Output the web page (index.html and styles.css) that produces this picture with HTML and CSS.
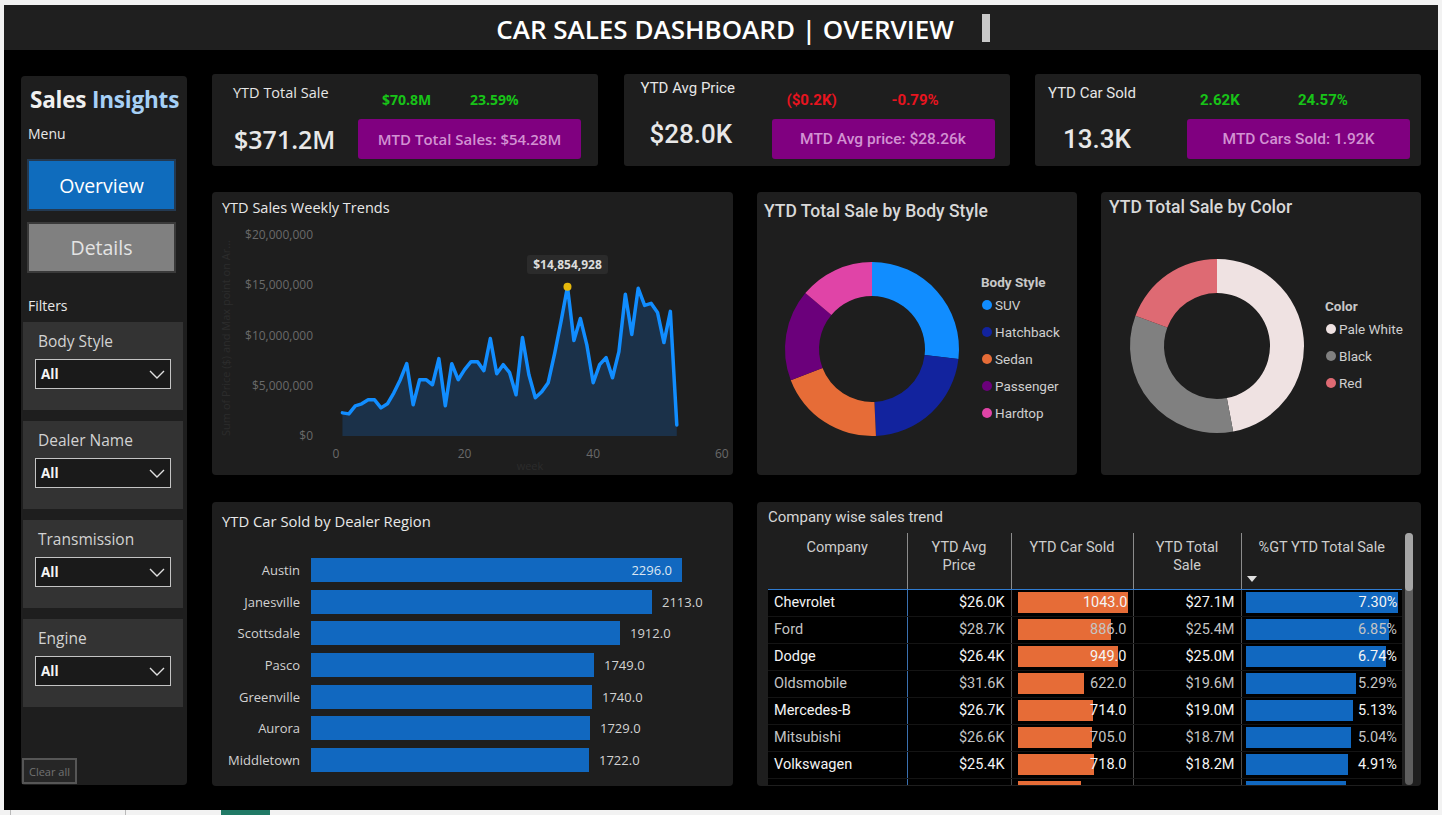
FILE: index.html
```html
<!DOCTYPE html>
<html lang="en">
<head>
<meta charset="utf-8">
<title>Car Sales Dashboard | Overview</title>
<link rel="stylesheet" href="styles.css">
</head>
<body>
<div class="screen">
  <header class="topbar">
    <h1 class="topbar-title">CAR SALES DASHBOARD | OVERVIEW</h1>
    <span class="topbar-mark"></span>
  </header>

  <div class="workspace">
    <aside class="sidebar">
      <div class="brand"><span class="brand-a">Sales</span> <span class="brand-b">Insights</span></div>
      <div class="side-label">Menu</div>
      <button class="nav-btn nav-btn--active">Overview</button>
      <button class="nav-btn nav-btn--muted">Details</button>
      <div class="side-label side-label--filters">Filters</div>

      <div class="slicer">
        <div class="slicer-title">Body Style</div>
        <div class="dropdown"><span>All</span>
          <svg class="chev" width="16" height="9" viewBox="0 0 16 9"><polyline points="1,1 8,8 15,1"/></svg>
        </div>
      </div>
      <div class="slicer">
        <div class="slicer-title">Dealer Name</div>
        <div class="dropdown"><span>All</span>
          <svg class="chev" width="16" height="9" viewBox="0 0 16 9"><polyline points="1,1 8,8 15,1"/></svg>
        </div>
      </div>
      <div class="slicer">
        <div class="slicer-title">Transmission</div>
        <div class="dropdown"><span>All</span>
          <svg class="chev" width="16" height="9" viewBox="0 0 16 9"><polyline points="1,1 8,8 15,1"/></svg>
        </div>
      </div>
      <div class="slicer">
        <div class="slicer-title">Engine</div>
        <div class="dropdown"><span>All</span>
          <svg class="chev" width="16" height="9" viewBox="0 0 16 9"><polyline points="1,1 8,8 15,1"/></svg>
        </div>
      </div>

      <button class="clear-all">Clear all</button>
    </aside>

    <main class="content">
      <section class="kpi-row">
        <article class="kpi kpi--sale">
          <div class="kpi-label">YTD Total Sale</div>
          <div class="kpi-deltas"><span class="up">$70.8M</span><span class="up">23.59%</span></div>
          <div class="kpi-value">$371.2M</div>
          <div class="kpi-mtd">MTD Total Sales: $54.28M</div>
        </article>
        <article class="kpi kpi--price">
          <div class="kpi-label">YTD Avg Price</div>
          <div class="kpi-deltas"><span class="down">($0.2K)</span><span class="down">-0.79%</span></div>
          <div class="kpi-value">$28.0K</div>
          <div class="kpi-mtd">MTD Avg price: $28.26k</div>
        </article>
        <article class="kpi kpi--sold">
          <div class="kpi-label">YTD Car Sold</div>
          <div class="kpi-deltas"><span class="up">2.62K</span><span class="up">24.57%</span></div>
          <div class="kpi-value">13.3K</div>
          <div class="kpi-mtd">MTD Cars Sold: 1.92K</div>
        </article>
      </section>

      <section class="chart-row">
        <article class="panel">
          <h2 class="panel-title">YTD Sales Weekly Trends</h2>
          <svg class="trend" width="521" height="255" viewBox="0 0 521 255">
            <text class="axis-title" transform="translate(18,118) rotate(-90)" text-anchor="middle">Sum of Price ($) and Max point on Ar...</text>
            <g class="axis-y" text-anchor="end">
              <text x="101" y="19">$20,000,000</text>
              <text x="101" y="69">$15,000,000</text>
              <text x="101" y="120">$10,000,000</text>
              <text x="101" y="170">$5,000,000</text>
              <text x="101" y="220">$0</text>
            </g>
            <g class="axis-x" text-anchor="middle">
              <text x="124" y="238">0</text>
              <text x="252.6" y="238">20</text>
              <text x="381.2" y="238">40</text>
              <text x="509.8" y="238">60</text>
            </g>
            <text class="axis-title" x="318" y="250" text-anchor="middle">week</text>
            <polygon class="trend-area" points="130.43,216 130.43,192.89 136.86,193.89 143.29,185.85 149.72,183.84 156.15,179.82 162.58,179.82 169.01,187.86 175.44,183.84 181.87,172.79 188.3,159.72 194.73,143.64 201.16,184.85 207.59,159.72 214.02,159.72 220.45,164.75 226.88,138.62 233.31,185.85 239.74,143.64 246.17,159.72 252.6,149.67 259.03,141.63 265.46,141.63 271.89,150.68 278.32,118.52 284.75,153.69 291.18,144.65 297.61,152.69 304.04,174.8 310.47,117.51 316.9,154.7 323.33,177.81 329.76,171.78 336.19,162.74 342.62,133.59 349.05,101.43 355.48,66.76 361.91,120.53 368.34,98.42 374.77,124.55 381.2,162.74 387.63,144.65 394.06,137.61 400.49,157.71 406.92,131.58 413.35,74.3 419.78,114.5 426.21,68.27 432.64,85.35 439.07,83.34 445.5,92.39 451.93,122.54 458.36,91.38 464.79,204.95 464.79,216"/>
            <polyline class="trend-line" points="130.43,192.89 136.86,193.89 143.29,185.85 149.72,183.84 156.15,179.82 162.58,179.82 169.01,187.86 175.44,183.84 181.87,172.79 188.3,159.72 194.73,143.64 201.16,184.85 207.59,159.72 214.02,159.72 220.45,164.75 226.88,138.62 233.31,185.85 239.74,143.64 246.17,159.72 252.6,149.67 259.03,141.63 265.46,141.63 271.89,150.68 278.32,118.52 284.75,153.69 291.18,144.65 297.61,152.69 304.04,174.8 310.47,117.51 316.9,154.7 323.33,177.81 329.76,171.78 336.19,162.74 342.62,133.59 349.05,101.43 355.48,66.76 361.91,120.53 368.34,98.42 374.77,124.55 381.2,162.74 387.63,144.65 394.06,137.61 400.49,157.71 406.92,131.58 413.35,74.3 419.78,114.5 426.21,68.27 432.64,85.35 439.07,83.34 445.5,92.39 451.93,122.54 458.36,91.38 464.79,204.95"/>
            <circle class="trend-max" cx="355.48" cy="66.76" r="4"/>
            <rect class="tip-box" x="315" y="35" width="81" height="19" rx="3"/>
            <text class="tip-text" x="355.5" y="49" text-anchor="middle">$14,854,928</text>
          </svg>
        </article>

        <article class="panel">
          <h2 class="donut-title">YTD Total Sale by Body Style</h2>
          <div class="donut-body">
            <svg class="donut" width="224" height="245" viewBox="0 0 224 245">
              <path fill="#118dff" d="M115,32 A87,87 0 0 1 201.42,129 L167.65,125.09 A53,53 0 0 0 115,66 Z"/>
              <path fill="#12239e" d="M201.42,129 A87,87 0 0 1 118.95,205.91 L117.4,171.95 A53,53 0 0 0 167.65,125.09 Z"/>
              <path fill="#e66c37" d="M118.95,205.91 A87,87 0 0 1 33.78,150.18 L65.52,137.99 A53,53 0 0 0 117.4,171.95 Z"/>
              <path fill="#6b007b" d="M33.78,150.18 A87,87 0 0 1 48.35,63.08 L74.4,84.93 A53,53 0 0 0 65.52,137.99 Z"/>
              <path fill="#e044a7" d="M48.35,63.08 A87,87 0 0 1 115,32 L115,66 A53,53 0 0 0 74.4,84.93 Z"/>
            </svg>
            <ul class="legend legend--body">
              <li class="legend-head">Body Style</li>
              <li class="legend-item"><i class="dot dot--suv"></i>SUV</li>
              <li class="legend-item"><i class="dot dot--hatch"></i>Hatchback</li>
              <li class="legend-item"><i class="dot dot--sedan"></i>Sedan</li>
              <li class="legend-item"><i class="dot dot--pass"></i>Passenger</li>
              <li class="legend-item"><i class="dot dot--hard"></i>Hardtop</li>
            </ul>
          </div>
        </article>

        <article class="panel">
          <h2 class="donut-title donut-title--color">YTD Total Sale by Color</h2>
          <div class="donut-body">
            <svg class="donut" width="224" height="245" viewBox="0 3 224 245">
              <path fill="#efe2e2" d="M116,32 A87,87 0 0 1 132.15,204.49 L125.84,171.08 A53,53 0 0 0 116,66 Z"/>
              <path fill="#808080" d="M132.15,204.49 A87,87 0 0 1 34.46,88.67 L66.32,100.53 A53,53 0 0 0 125.84,171.08 Z"/>
              <path fill="#de6a73" d="M34.46,88.67 A87,87 0 0 1 116,32 L116,66 A53,53 0 0 0 66.32,100.53 Z"/>
            </svg>
            <ul class="legend legend--color">
              <li class="legend-head">Color</li>
              <li class="legend-item"><i class="dot dot--white"></i>Pale White</li>
              <li class="legend-item"><i class="dot dot--black"></i>Black</li>
              <li class="legend-item"><i class="dot dot--red"></i>Red</li>
            </ul>
          </div>
        </article>
      </section>

      <section class="bottom-row">
        <article class="panel">
          <h2 class="panel-title panel-title--bars">YTD Car Sold by Dealer Region</h2>
          <div class="hbars">
            <div class="hbar-row"><span class="hbar-label">Austin</span><span class="hbar-fill" style="width:371px"><span class="hbar-inside">2296.0</span></span></div>
            <div class="hbar-row"><span class="hbar-label">Janesville</span><span class="hbar-fill" style="width:341px"></span><span class="hbar-val">2113.0</span></div>
            <div class="hbar-row"><span class="hbar-label">Scottsdale</span><span class="hbar-fill" style="width:309px"></span><span class="hbar-val">1912.0</span></div>
            <div class="hbar-row"><span class="hbar-label">Pasco</span><span class="hbar-fill" style="width:283px"></span><span class="hbar-val">1749.0</span></div>
            <div class="hbar-row"><span class="hbar-label">Greenville</span><span class="hbar-fill" style="width:281px"></span><span class="hbar-val">1740.0</span></div>
            <div class="hbar-row"><span class="hbar-label">Aurora</span><span class="hbar-fill" style="width:279px"></span><span class="hbar-val">1729.0</span></div>
            <div class="hbar-row"><span class="hbar-label">Middletown</span><span class="hbar-fill" style="width:278px"></span><span class="hbar-val">1722.0</span></div>
          </div>
        </article>

        <article class="panel">
          <h2 class="table-title">Company wise sales trend</h2>
          <div class="table-wrap">
            <div class="table-scroll">
              <table class="sales-table">
                <colgroup>
                  <col class="c-company"><col class="c-avg"><col class="c-sold"><col class="c-total"><col class="c-gt">
                </colgroup>
                <thead>
                  <tr>
                    <th>Company</th>
                    <th>YTD Avg<br>Price</th>
                    <th>YTD Car Sold</th>
                    <th>YTD Total<br>Sale</th>
                    <th class="th-sorted"><span>%GT YTD Total Sale</span><span class="sort-caret"></span></th>
                  </tr>
                </thead>
                <tbody>
                  <tr>
                    <td class="t-name">Chevrolet</td><td class="t-num">$26.0K</td>
                    <td class="t-bar"><div class="cellbar"><span class="fill fill--orange" style="width:110px"></span><span class="val">1043.0</span></div></td>
                    <td class="t-num">$27.1M</td>
                    <td class="t-bar t-bar--gt"><div class="cellbar"><span class="fill fill--blue" style="width:152px"></span><span class="val">7.30%</span></div></td>
                  </tr>
                  <tr>
                    <td class="t-name">Ford</td><td class="t-num">$28.7K</td>
                    <td class="t-bar"><div class="cellbar"><span class="fill fill--orange" style="width:93px"></span><span class="val">886.0</span></div></td>
                    <td class="t-num">$25.4M</td>
                    <td class="t-bar t-bar--gt"><div class="cellbar"><span class="fill fill--blue" style="width:143px"></span><span class="val">6.85%</span></div></td>
                  </tr>
                  <tr>
                    <td class="t-name">Dodge</td><td class="t-num">$26.4K</td>
                    <td class="t-bar"><div class="cellbar"><span class="fill fill--orange" style="width:100px"></span><span class="val">949.0</span></div></td>
                    <td class="t-num">$25.0M</td>
                    <td class="t-bar t-bar--gt"><div class="cellbar"><span class="fill fill--blue" style="width:140px"></span><span class="val">6.74%</span></div></td>
                  </tr>
                  <tr>
                    <td class="t-name">Oldsmobile</td><td class="t-num">$31.6K</td>
                    <td class="t-bar"><div class="cellbar"><span class="fill fill--orange" style="width:66px"></span><span class="val">622.0</span></div></td>
                    <td class="t-num">$19.6M</td>
                    <td class="t-bar t-bar--gt"><div class="cellbar"><span class="fill fill--blue" style="width:110px"></span><span class="val">5.29%</span></div></td>
                  </tr>
                  <tr>
                    <td class="t-name">Mercedes-B</td><td class="t-num">$26.7K</td>
                    <td class="t-bar"><div class="cellbar"><span class="fill fill--orange" style="width:75px"></span><span class="val">714.0</span></div></td>
                    <td class="t-num">$19.0M</td>
                    <td class="t-bar t-bar--gt"><div class="cellbar"><span class="fill fill--blue" style="width:107px"></span><span class="val">5.13%</span></div></td>
                  </tr>
                  <tr>
                    <td class="t-name">Mitsubishi</td><td class="t-num">$26.6K</td>
                    <td class="t-bar"><div class="cellbar"><span class="fill fill--orange" style="width:74px"></span><span class="val">705.0</span></div></td>
                    <td class="t-num">$18.7M</td>
                    <td class="t-bar t-bar--gt"><div class="cellbar"><span class="fill fill--blue" style="width:105px"></span><span class="val">5.04%</span></div></td>
                  </tr>
                  <tr>
                    <td class="t-name">Volkswagen</td><td class="t-num">$25.4K</td>
                    <td class="t-bar"><div class="cellbar"><span class="fill fill--orange" style="width:76px"></span><span class="val">718.0</span></div></td>
                    <td class="t-num">$18.2M</td>
                    <td class="t-bar t-bar--gt"><div class="cellbar"><span class="fill fill--blue" style="width:102px"></span><span class="val">4.91%</span></div></td>
                  </tr>
                  <tr class="row-peek">
                    <td></td><td></td>
                    <td class="t-bar"><div class="cellbar"><span class="fill fill--orange" style="width:63px"></span></div></td>
                    <td></td>
                    <td class="t-bar t-bar--gt"><div class="cellbar"><span class="fill fill--blue" style="width:100px"></span></div></td>
                  </tr>
                </tbody>
              </table>
            </div>
            <div class="vscroll"><span class="vscroll-thumb"></span></div>
          </div>
        </article>
      </section>
    </main>
  </div>
</div>
<div class="taskbar"><span class="taskbar-tick"></span><span class="taskbar-tick taskbar-tick--b"></span><span class="taskbar-tab"></span></div>
</body>
</html>
```

FILE: styles.css
```css
* {
  box-sizing: border-box;
  margin: 0;
  padding: 0;
}

body {
  width: 1442px;
  height: 815px;
  overflow: hidden;
  background: #f2f2f2;
  font-family: "Open Sans", "Noto Sans", sans-serif;
  color: #e6e6e6;
}

.screen {
  margin: 5px 4px 0 4px;
  height: 805px;
  background: #000;
  display: flex;
  flex-direction: column;
}

/* ---------- title bar ---------- */
.topbar {
  height: 45px;
  flex: none;
  background: #1f1f1f;
  display: flex;
  align-items: center;
  justify-content: center;
  gap: 28px;
  padding-left: 44px;
}

.topbar-title {
  font-size: 26px;
  font-weight: 600;
  color: #fff;
  line-height: 1;
  margin-top: 2px;
}

.topbar-mark {
  width: 8px;
  height: 28px;
  background: #c8c8c8;
}

/* ---------- main area ---------- */
.workspace {
  display: flex;
  gap: 25px;
  padding: 24px 17px 0 17px;
}

/* ---------- sidebar ---------- */
.sidebar {
  width: 166px;
  height: 709px;
  margin-top: 2px;
  flex: none;
  background: #1e1e1e;
  border-radius: 4px;
  display: flex;
  flex-direction: column;
}

.brand {
  margin: 9px 0 0 9px;
  font-size: 22.5px;
  font-weight: 700;
  line-height: 30px;
  white-space: nowrap;
  letter-spacing: -0.2px;
}

.brand-a { color: #f0f0f0; }
.brand-b { color: #a6d0f6; }

.side-label {
  margin: 9px 0 0 7px;
  font-size: 14px;
  line-height: 20px;
  color: #e8e8e8;
}

.side-label--filters {
  margin-top: 23px;
}

.nav-btn {
  margin: 15px 0 0 6px;
  width: 149px;
  height: 52px;
  font-family: inherit;
  font-size: 19.5px;
  border-style: solid;
  border-width: 2px;
  cursor: pointer;
}

.nav-btn--active {
  background: #0f6cbd;
  color: #fff;
  border-color: #243a52;
}

.nav-btn--muted {
  margin-top: 11px;
  height: 51px;
  background: #808080;
  color: #e4e4e4;
  border-color: #3a3a3a;
}

.slicer {
  margin: 11px 0 0 2px;
  width: 160px;
  height: 88px;
  background: #333;
  padding: 9px 0 0 12px;
}

.side-label--filters + .slicer {
  margin-top: 6px;
}

.slicer-title {
  padding-left: 3px;
  font-size: 15.5px;
  line-height: 20px;
  color: #d2d2d2;
}

.dropdown {
  margin-top: 8px;
  width: 136px;
  height: 30px;
  background: #1a1a1a;
  border: 1px solid #c4c4c4;
  display: flex;
  align-items: center;
  justify-content: space-between;
  padding: 0 5px 0 5px;
  font-size: 13.5px;
  font-weight: 700;
  color: #f4f4f4;
}

.chev {
  fill: none;
  stroke: #e0e0e0;
  stroke-width: 1.4;
}

.clear-all {
  margin: auto 0 1px 1px;
  width: 55px;
  height: 26px;
  background: #262626;
  border: 2px solid #565656;
  color: #727272;
  font-family: inherit;
  font-size: 11px;
}

/* ---------- content grid ---------- */
.content {
  flex: 1;
  display: flex;
  flex-direction: column;
  gap: 26px;
}

.kpi-row {
  height: 92px;
  display: grid;
  grid-template-columns: repeat(3, 1fr);
  column-gap: 25.5px;
}

.chart-row {
  height: 283px;
  display: grid;
  grid-template-columns: 521px 320px 320px;
  column-gap: 24px;
}

.bottom-row {
  height: 284px;
  margin-top: 1px;
  display: grid;
  grid-template-columns: 521px 1fr;
  column-gap: 24px;
}

.panel {
  background: #1e1e1e;
  border-radius: 4px;
  overflow: hidden;
}

/* ---------- KPI cards ---------- */
.kpi {
  --pl: 21px;
  --lc: 125px;
  --vx: 1px;
  --vy: 0px;
  --dx: 24px;
  --dw: 88px;
  --ly: 9px;
  background: #1e1e1e;
  border-radius: 3px;
  display: grid;
  grid-template-columns: var(--lc) 223px;
  grid-template-rows: 40px 1fr;
  padding-left: var(--pl);
  font-family: Roboto, "Open Sans", sans-serif;
}

.kpi--sale {
  font-family: "Open Sans", "Noto Sans", sans-serif;
}

.kpi--price {
  --pl: 17px;
  --lc: 131px;
  --vx: 9px;
  --vy: -5px;
  --dx: 15px;
  --dw: 105px;
  --ly: 4px;
}

.kpi--sold {
  --pl: 13px;
  --lc: 139px;
  --vx: 15px;
  --dx: 13px;
  --dw: 98px;
}

.kpi-label {
  padding-top: var(--ly);
  font-size: 15px;
  line-height: 20px;
  color: #e6e6e6;
  white-space: nowrap;
}

.kpi--sale .kpi-label {
  font-size: 14.5px;
}

.kpi-deltas {
  display: grid;
  grid-template-columns: var(--dw) auto;
  padding: 16px 0 0 var(--dx);
  font-size: 15px;
  font-weight: 700;
  line-height: 20px;
}

.kpi--sale .kpi-deltas {
  font-size: 14px;
}

.up { color: #18c318; }
.down { color: #e8141f; }

.kpi-value {
  padding-left: var(--vx);
  margin-top: calc(5px + var(--vy));
  font-size: 26px;
  font-weight: 500;
  line-height: 40px;
  color: #e8e8e8;
  white-space: nowrap;
}

.kpi--sale .kpi-value {
  font-weight: 600;
  font-size: 25px;
}

.kpi-mtd {
  margin-top: 5px;
  height: 40px;
  background: #800080;
  border-radius: 3px;
  display: flex;
  align-items: center;
  justify-content: center;
  font-size: 15.5px;
  font-weight: 500;
  color: #d292d2;
  white-space: nowrap;
}

.kpi--sale .kpi-mtd {
  font-size: 15px;
  font-weight: 600;
}

/* ---------- panel titles ---------- */
.panel-title {
  height: 28px;
  padding: 6px 0 0 10px;
  font-size: 14.5px;
  font-weight: 400;
  line-height: 20px;
  color: #e8e8e8;
}

.panel-title--bars {
  padding-top: 9px;
  height: 29px;
  font-size: 14.8px;
}

/* ---------- weekly trend ---------- */
.trend {
  display: block;
  font-family: "Open Sans", "Noto Sans", sans-serif;
}

.axis-y text,
.axis-x text {
  font-size: 12px;
  fill: #6a6a6a;
}

.axis-title {
  font-size: 11px;
  fill: #2c2c2c;
}

.trend-area {
  fill: #1b3149;
}

.trend-line {
  fill: none;
  stroke: #118dff;
  stroke-width: 3.5;
  stroke-linejoin: round;
  stroke-linecap: round;
}

.trend-max {
  fill: #e6b80c;
}

.tip-box {
  fill: #2b2b2b;
}

.tip-text {
  font-size: 12px;
  font-weight: 700;
  fill: #dcdcdc;
}

/* ---------- donuts ---------- */
.donut-title {
  height: 38px;
  padding: 9px 0 0 7px;
  font-family: Roboto, "Open Sans", sans-serif;
  font-size: 17.5px;
  font-weight: 500;
  line-height: 20px;
  color: #d8d8d8;
  white-space: nowrap;
}

.donut-title--color {
  padding: 5px 0 0 8px;
}

.donut-body {
  display: flex;
  height: 245px;
}

.donut {
  display: block;
  flex: none;
}

.legend {
  list-style: none;
  font-family: Roboto, "Open Sans", sans-serif;
  font-size: 13.5px;
  color: #cfcfcf;
}

.legend--body { margin-top: 43px; }
.legend--color { margin-top: 67px; }

.legend-head {
  height: 18px;
  line-height: 18px;
  font-weight: 700;
  color: #c8c8c8;
}

.legend-item {
  height: 27px;
  display: flex;
  align-items: center;
  gap: 3px;
  padding-left: 1px;
  white-space: nowrap;
}

.dot {
  width: 10px;
  height: 10px;
  border-radius: 50%;
  flex: none;
}

.dot--suv { background: #118dff; }
.dot--hatch { background: #12239e; }
.dot--sedan { background: #e66c37; }
.dot--pass { background: #6b007b; }
.dot--hard { background: #e044a7; }
.dot--white { background: #efe2e2; }
.dot--black { background: #808080; }
.dot--red { background: #de6a73; }

/* ---------- dealer region bars ---------- */
.hbars {
  margin-top: 27px;
  display: flex;
  flex-direction: column;
  gap: 7.7px;
}

.hbar-row {
  height: 24px;
  display: flex;
  align-items: center;
  font-size: 13px;
  color: #d2d2d2;
}

.hbar-label {
  width: 88px;
  margin-right: 11px;
  text-align: right;
  white-space: nowrap;
}

.hbar-fill {
  height: 24px;
  background: #1168c0;
  display: flex;
  align-items: center;
  justify-content: flex-end;
}

.hbar-inside {
  padding-right: 10px;
  color: #dce6f2;
}

.hbar-val {
  margin-left: 10px;
}

/* ---------- company table ---------- */
.table-title {
  height: 31px;
  padding: 5px 0 0 11px;
  font-family: Roboto, "Open Sans", sans-serif;
  font-size: 15px;
  font-weight: 400;
  line-height: 20px;
  color: #d6d6d6;
}

.table-wrap {
  margin-left: 11px;
  width: 645px;
  height: 252px;
  display: flex;
  gap: 3px;
}

.table-scroll {
  width: 634px;
  overflow: hidden;
}

.sales-table {
  width: 634px;
  table-layout: fixed;
  border-collapse: collapse;
  font-family: Roboto, "Open Sans", sans-serif;
  font-size: 14.5px;
}

.c-company { width: 139px; }
.c-avg { width: 104px; }
.c-sold { width: 122px; }
.c-total { width: 108px; }
.c-gt { width: 161px; }

.sales-table th {
  height: 56px;
  padding-top: 6px;
  vertical-align: top;
  font-weight: 400;
  line-height: 18px;
  color: #cdcdcd;
  border-right: 1px solid #8c8c8c;
  border-bottom: 1px solid #2f7bd0;
}

.sales-table th:last-child {
  border-right: none;
}

.th-sorted span {
  display: block;
}

.th-sorted .sort-caret {
  width: 0;
  height: 0;
  margin: 19px 0 0 5px;
  border-left: 5px solid transparent;
  border-right: 5px solid transparent;
  border-top: 6px solid #e0e0e0;
}

.sales-table td {
  height: 27px;
  background: #000;
  border-right: 1px solid #4a4a4a;
  border-bottom: 1px solid #141414;
  white-space: nowrap;
}

.sales-table td:first-child {
  border-right-color: #3a70b0;
}

.sales-table td:last-child {
  border-right: none;
}

.sales-table tbody tr:nth-child(odd) { color: #f4f4f4; }
.sales-table tbody tr:nth-child(even) { color: #c4c4c4; }

.t-name {
  padding-left: 6px;
}

.t-num {
  padding-right: 6px;
  text-align: right;
}

.t-bar {
  padding: 0 6px;
}

.t-bar--gt {
  padding: 0 5px 0 4px;
}

.cellbar {
  display: grid;
  height: 21px;
}

.cellbar .fill,
.cellbar .val {
  grid-area: 1 / 1;
}

.fill {
  justify-self: start;
  height: 21px;
}

.fill--orange { background: #e66c37; }
.fill--blue { background: #1168c0; }

.val {
  justify-self: end;
  line-height: 21px;
}

.vscroll {
  width: 8px;
  height: 252px;
  background: #5e5e5e;
  border-radius: 4px;
  display: flex;
  flex-direction: column;
}

.vscroll-thumb {
  height: 58px;
  background: #a6a6a6;
  border-radius: 4px;
}

/* ---------- bottom strip ---------- */
.taskbar {
  height: 5px;
  display: flex;
}

.taskbar-tick {
  width: 1px;
  height: 5px;
  margin-left: 10px;
  background: #b9b9b9;
}

.taskbar-tick--b {
  margin-left: 114px;
}

.taskbar-tab {
  width: 49px;
  height: 5px;
  margin-left: 95px;
  background: #217a66;
}
```
